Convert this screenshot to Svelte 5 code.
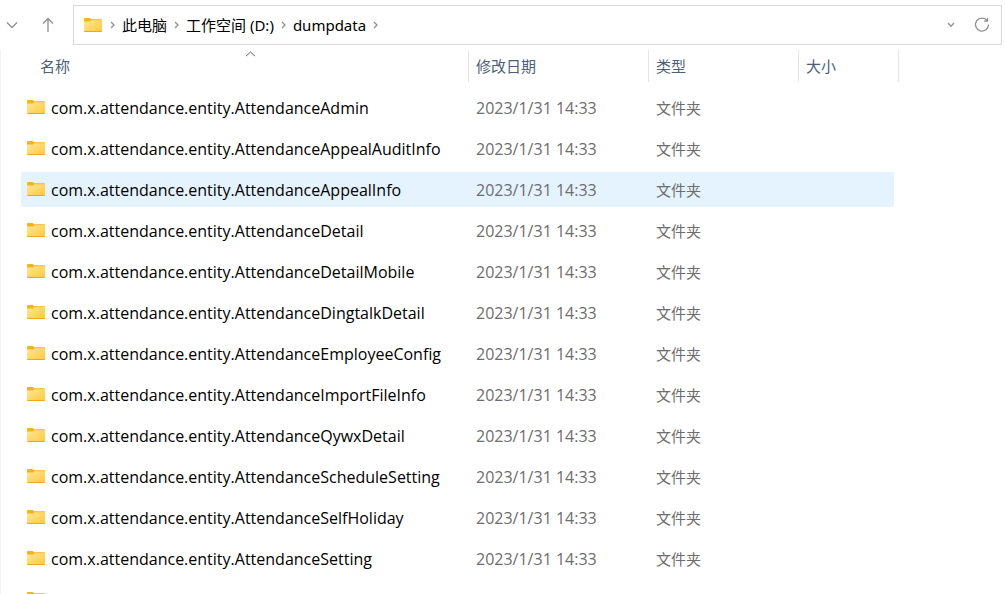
<script>
    let path = ["此电脑", "工作空间 (D:)", "dumpdata"];

    let selected = 2;

    let names = [
        "AttendanceAdmin",
        "AttendanceAppealAuditInfo",
        "AttendanceAppealInfo",
        "AttendanceDetail",
        "AttendanceDetailMobile",
        "AttendanceDingtalkDetail",
        "AttendanceEmployeeConfig",
        "AttendanceImportFileInfo",
        "AttendanceQywxDetail",
        "AttendanceScheduleSetting",
        "AttendanceSelfHoliday",
        "AttendanceSetting",
    ];

    let folders = names.map((name) => ({
        name: "com.x.attendance.entity." + name,
        date: "2023/1/31 14:33",
        type: "文件夹",
    }));
    // the list goes on below the window edge
    folders.push({ name: "", date: "", type: "" });
</script>

<svelte:head>
    <title>dumpdata</title>
</svelte:head>

{#snippet folderIcon()}
    <svg class="folder" width="18" height="15" viewBox="0 0 18 15" aria-hidden="true">
        <defs>
            <linearGradient id="face" x1="0" y1="0" x2="1" y2="1">
                <stop offset="0" stop-color="#ffe69c" />
                <stop offset="1" stop-color="#ffc937" />
            </linearGradient>
        </defs>
        <path d="M0 0.8Q0 0 0.8 0H5.6L7.4 1.2H17.2Q18 1.2 18 2V6H0Z" fill="#f7b31b" />
        <path d="M0 3.6H6L7.6 2.2H18V13.2Q18 14 17.2 14H0.8Q0 14 0 13.2Z" fill="url(#face)" />
        <path d="M0.3 13.5H17.7" stroke="#eda91d" stroke-width="1" />
    </svg>
{/snippet}

{#snippet separator()}
    <svg class="sep" width="5" height="8" viewBox="0 0 5 8" aria-hidden="true">
        <path d="M1 1L4 4L1 7" />
    </svg>
{/snippet}

<div class="explorer">
    <header>
        <button class="recent" aria-label="最近浏览的位置">
            <svg width="12" height="8" viewBox="0 0 12 8"><path d="M1 1.5L6 6.5L11 1.5" /></svg>
        </button>
        <button class="up" aria-label="上移">
            <svg width="12" height="16" viewBox="0 0 12 16"><path d="M6 15V1.5M1 6.5L6 1.5L11 6.5" /></svg>
        </button>
        <nav>
            {@render folderIcon()}
            {@render separator()}
            {#each path as item}
                <a href="#top">{item}</a>
                {@render separator()}
            {/each}
            <button class="drop" aria-label="展开">
                <svg width="8" height="6" viewBox="0 0 8 6"><path d="M1 1L4 4.2L7 1" stroke-width="1.5" /></svg>
            </button>
            <button class="refresh" aria-label="刷新">
                <svg width="16" height="16" viewBox="0 0 16 16">
                    <path d="M13 3.4A6.5 6.5 0 1 0 14.5 7.5M13.5 0.8V4.2H10" />
                </svg>
            </button>
        </nav>
    </header>

    <main>
        <table>
            <thead>
                <tr>
                    <th class="name">
                        <button>名称</button>
                        <svg class="sort" width="11" height="6" viewBox="0 0 11 6" aria-hidden="true">
                            <path d="M1 5.2L5.5 1L10 5.2" />
                        </svg>
                    </th>
                    <th class="date"><button>修改日期</button></th>
                    <th class="type"><button>类型</button></th>
                    <th class="size"><button>大小</button></th>
                </tr>
            </thead>
            <tbody>
                {#each folders as folder, i}
                    <tr class:selected={i === selected} on:click={() => (selected = i)}>
                        <td><div class="cell latin first">{@render folderIcon()}<span>{folder.name}</span></div></td>
                        <td><div class="cell latin">{folder.date}</div></td>
                        <td><div class="cell">{folder.type}</div></td>
                        <td class="end"><div class="cell last"></div></td>
                    </tr>
                {/each}
            </tbody>
        </table>
    </main>
</div>

<style>
    :global(body) {
        background: #fff;
    }

    .explorer {
        height: 100vh;
        overflow: hidden;
        display: flex;
        flex-direction: column;
        font-family: "Noto Sans", "Noto Sans CJK SC", sans-serif;
        font-size: 15px;
        line-height: 20px;
    }

    button {
        display: flex;
        align-items: center;
        padding: 0;
        border: 0;
        background: none;
        font: inherit;
        color: inherit;
    }

    svg {
        display: block;
        flex: none;
    }

    button path, .sep path, .sort path {
        fill: none;
        stroke: #8f8f8f;
        stroke-width: 1.3;
    }

    header {
        display: flex;
        align-items: center;
        flex: none;
        padding: 5px 3px 5px 6px;
    }

    .up {
        margin-left: 24px;
    }

    nav {
        flex: 1;
        display: flex;
        align-items: center;
        box-sizing: border-box;
        height: 40px;
        margin-left: 19px;
        padding: 0 11px 0 10px;
        border: 1px solid #d9d9d9;
    }

    nav a {
        margin: 0 7px;
        color: #000;
        text-decoration: none;
    }

    nav .folder {
        margin-right: 8px;
    }

    .drop {
        margin-left: auto;
    }

    .refresh {
        margin-left: 19px;
    }

    main {
        flex: 1;
        min-height: 0;
        padding-left: 20px;
        border-left: 1px solid #f3f3f3;
    }

    table {
        width: 878px;
        table-layout: fixed;
        border-spacing: 0;
    }

    th {
        position: relative;
        height: 37px;
        padding: 0;
        vertical-align: top;
        font-weight: normal;
        color: #4c607a;
    }

    th button {
        width: 100%;
        height: 32px;
        padding-left: 7px;
        border-right: 1px solid #e5e5e5;
    }

    .name {
        width: 448px;
    }

    .name button {
        padding-left: 19px;
    }

    .date {
        width: 180px;
    }

    .type {
        width: 150px;
    }

    .sort {
        position: absolute;
        top: 1px;
        left: 224px;
    }

    .sort path {
        stroke: #666;
        stroke-width: 1;
    }

    td {
        padding: 3px 0;
        color: #6d6d6d;
    }

    .end {
        padding-right: 5px;
    }

    .cell {
        display: flex;
        align-items: center;
        height: 35px;
        padding-left: 7px;
        white-space: nowrap;
    }

    .latin {
        font-family: "Open Sans", "Noto Sans", sans-serif;
        font-size: 16px;
    }

    .first {
        gap: 6px;
        padding-left: 6px;
        color: #000;
        border-radius: 2px 0 0 2px;
    }

    .last {
        border-radius: 0 2px 2px 0;
    }

    .selected .cell {
        background: #e5f3ff;
    }
</style>
